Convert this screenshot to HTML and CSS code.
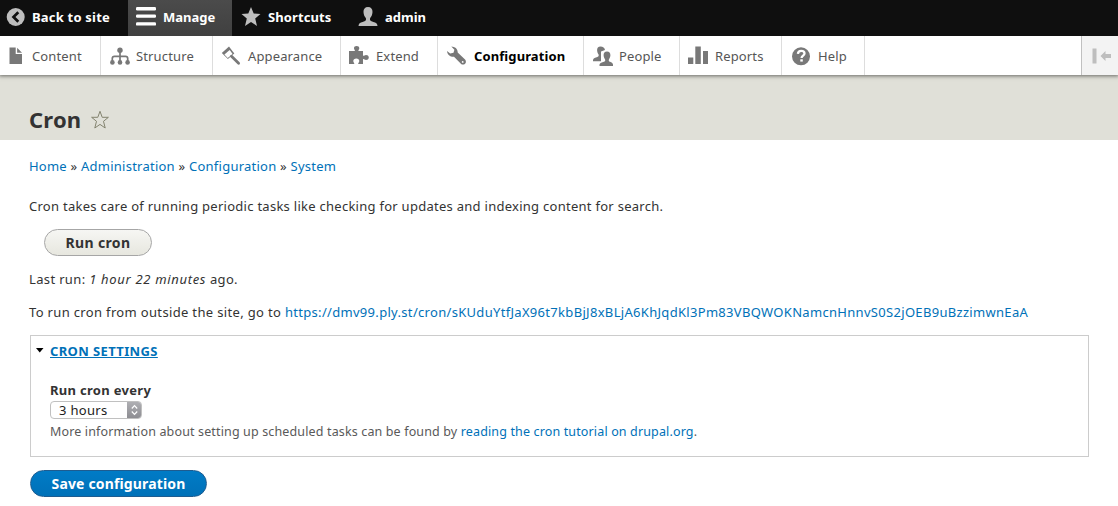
FILE: index.html
```html
<!DOCTYPE html>
<html lang="en">
<head>
<meta charset="utf-8">
<title>Cron</title>
<link rel="stylesheet" href="styles.css">
</head>
<body>
<nav class="bar">
  <a class="bar-item back"><svg class="icon" viewBox="0 0 20 20"><circle cx="9.7" cy="10" r="9" fill="#bebebe"/><path d="M12.3 5.2 7.5 10l4.8 4.8" fill="none" stroke="#0f0f0f" stroke-width="2.7"/></svg><span>Back to site</span></a>
  <a class="bar-item manage"><svg class="icon" viewBox="0 0 20 20" fill="#fff"><rect y="0" width="20" height="3.4" rx="1.2"/><rect y="7.6" width="20" height="3.2" rx="1.2"/><rect y="15.2" width="20" height="3.4" rx="1.2"/></svg><span>Manage</span></a>
  <a class="bar-item shortcuts"><svg class="icon" viewBox="0 0 20 20"><path d="M10 0l2.7 6.6 6.8.4-5.3 4.5 1.8 7.5-6-4-6 4 1.8-7.5L.5 7l6.8-.4z" fill="#bebebe"/></svg><span>Shortcuts</span></a>
  <a class="bar-item admin"><svg class="icon" viewBox="0 0 20 20"><path d="M10 0C7 0 5.300 2 5.500 5c.1 2.500 1 4.600 2.300 6 .5 1.500.2 2.600-1.300 3.300-2.600 1-5 1.400-5.700 3.200L.5 19h19l-.3-1.500c-.7-1.800-3.100-2.200-5.700-3.200-1.500-.7-1.800-1.800-1.300-3.300 1.300-1.400 2.200-3.500 2.300-6C14.700 2 13 0 10 0z" fill="#bebebe"/></svg><span>admin</span></a>
</nav>
<nav class="tray">
  <a class="tab content"><svg class="icon" viewBox="0 0 20 20" fill="#787878"><path d="M1.500 1.500h6.200V8h6.300V18H1.500z"/><path d="M9.100 1.700 14 6.700H9.100z"/></svg><span>Content</span></a>
  <a class="tab structure"><svg class="icon" viewBox="0 0 20 20" fill="#787878"><circle cx="10" cy="4.300" r="2.700"/><path d="M10 5v11M2.300 16v-3.500q0-2.200 2.200-2.200h11q2.200 0 2.200 2.200V16" fill="none" stroke="#787878" stroke-width="1.700"/><circle cx="2.400" cy="16.400" r="2.300"/><circle cx="10" cy="16.400" r="2.300"/><circle cx="17.600" cy="16.400" r="2.300"/></svg><span>Structure</span></a>
  <a class="tab appearance"><svg class="icon" viewBox="0 0 20 20"><path d="M8 .500 13.300 7.400 6.900 13 .800 7z" fill="#787878"/><path d="M8.700 4l2.900 3.900-4.900 4-3.300-3.500z" fill="#fff"/><path d="M10.500 10.200 17.600 17.200" stroke="#787878" stroke-width="2.800" stroke-linecap="round"/></svg><span>Appearance</span></a>
  <a class="tab extend"><svg class="icon" viewBox="0 0 20 20"><path d="M0 5h5.800c.5-.8-.8-1.300-.8-2.700C5 .800 6 0 7.600 0s2.700.800 2.700 2.300c0 1.400-1.300 1.900-.8 2.700H14v4.500c.8.800 1.500-.6 3-.6s2.800.8 2.800 2.500-1.300 2.500-2.800 2.500-2.200-1.400-3-.6V18H9.300c-.6-1 1-1.500 1-3 0-1.600-1.200-2.500-3-2.500s-3 .9-3 2.500c0 1.500 1.400 2 .9 3H0z" fill="#787878"/></svg><span>Extend</span></a>
  <a class="tab configuration"><svg class="icon" viewBox="0 0 20 20"><path d="M4.300.500C8 .600 10.800 2.900 10.700 6.400l7.600 7.300c1.800 2.800-.7 5.900-3.900 4.600L7 10.800C3.500 11.100.3 8.700 0 4.900l3.200 2.500 3.300-.6.900-3z" fill="#787878"/><circle cx="15.700" cy="15.900" r=".9" fill="#fff"/></svg><span>Configuration</span></a>
  <a class="tab people"><svg class="icon" viewBox="0 0 20 20" fill="#787878"><path d="M7.500.500C5.200.500 4 2.100 4.100 4.300c.1 1.900.7 3.200 1.500 4.300.3 1.500-.2 2-1.200 2.500C2.400 11.900.3 12.100 0 13.900v1.400h8V5.500l4-1.500C11.700 1.800 10 .500 7.500.500z"/><path d="M14 5.500c-2.300 0-3.500 1.500-3.400 3.800.1 1.800.7 3 1.500 4.100.4 1.400-.1 1.900-1.200 2.400-1.900.8-4.100 1-4.400 2.700V20H20v-1.500c-.4-1.700-1.300-1.900-3-2.700-1.100-.5-1.500-1-1.100-2.400.8-1.100 1.400-2.300 1.500-4.100.1-2.300-1.100-3.800-3.400-3.800z" stroke="#fff" stroke-width="1.400" paint-order="stroke"/></svg><span>People</span></a>
  <a class="tab reports"><svg class="icon" viewBox="0 0 20 20" fill="#787878"><rect x="0" y="11.500" width="5.300" height="6.500"/><rect x="7.300" y="0.500" width="5.500" height="17.500"/><rect x="15" y="5" width="5" height="13"/></svg><span>Reports</span></a>
  <a class="tab help"><svg class="icon" viewBox="0 0 20 20"><circle cx="9" cy="10.300" r="9" fill="#787878"/><path d="M5.900 7.800c.2-2 1.500-2.900 3.300-2.900 2 0 3.300 1 3.300 2.600 0 2.200-2.900 2.100-2.900 4.600" fill="none" stroke="#fff" stroke-width="2.300"/><rect x="8.300" y="13.300" width="2.500" height="2.300" fill="#fff"/></svg><span>Help</span></a>
  <a class="orientation"><svg class="icon" viewBox="0 0 20 20" fill="#bebebe"><path d="M0.500 2.500h4v15h-4zM8.500 10l5-5v3h5.500v4h-5.500v3z"/></svg></a>
</nav>
<header class="header">
  <h1 class="title">Cron</h1>
  <svg class="icon star" viewBox="0 0 20 20"><path d="M10 1.300l2.200 6h6.200l-4.900 4 1.700 6.700-5.200-3.600L4.800 18l1.700-6.700-4.900-4h6.200z" fill="none" stroke="#83836f" stroke-width="1" stroke-linejoin="round"/></svg>
</header>
<main class="page">
  <p class="line crumbs"><a>Home</a> » <a>Administration</a> » <a>Configuration</a> » <a>System</a></p>
  <p class="line intro">Cron takes care of running periodic tasks like checking for updates and indexing content for search.</p>
  <button class="button run">Run cron</button>
  <p class="line last">Last run: <em>1 hour 22 minutes</em> ago.</p>
  <p class="line outside"><span class="lead">To run cron from outside the site, go to </span><a class="cron-url">https://dmv99.ply.st/cron/sKUduYtfJaX96t7kbBjJ8xBLjA6KhJqdKl3Pm83VBQWOKNamcnHnnvS0S2jOEB9uBzzimwnEaA</a></p>
  <section class="details">
    <div class="summary"><svg class="arrow" viewBox="0 0 8 5"><path d="M0 0h7.500L3.750 4.500z"/></svg><a class="summary-link">CRON SETTINGS</a></div>
    <div class="label">Run cron every</div>
    <div class="select"><span class="value">3 hours</span><span class="stepper"><svg viewBox="0 0 15 18"><path d="M4.800 7.500l2.700-2.800 2.700 2.800M4.800 10.500l2.700 2.800 2.700-2.800" fill="none" stroke="#fff" stroke-width="1.200"/></svg></span></div>
    <p class="description"><span class="more">More information about setting up scheduled tasks can be found by </span><a class="tutorial">reading the cron tutorial on drupal.org</a>.</p>
  </section>
  <button class="button primary">Save configuration</button>
</main>
</body>
</html>
```
FILE: styles.css
```css
* { box-sizing: border-box; }
body {
  margin: 0;
  height: 506px;
  overflow: hidden;
  background: #fff;
  color: #333;
  font: 13px/20px "Noto Sans", "Open Sans", sans-serif;
}
p, h1 { margin: 0; }
a { color: #0071b8; white-space: nowrap; }
.icon { width: 20px; height: 20px; flex: none; }

.bar {
  position: relative;
  z-index: 1;
  display: flex;
  height: 36px;
  background: #0f0f0f;
}
.bar-item {
  display: flex;
  align-items: center;
  gap: 7px;
  padding-bottom: 2px;
  color: #fff;
  font-weight: 700;
}
.back { width: 128px; padding-left: 6px; gap: 6px; letter-spacing: .2px; }
.manage {
  width: 104px;
  padding-left: 8px;
  background: linear-gradient(#4b4b4b, #404040);
}
.shortcuts { width: 117px; padding-left: 9px; letter-spacing: .1px; }
.admin { padding-left: 9px; }

.tray {
  position: relative;
  display: flex;
  height: 39px;
  background: #fff;
  box-shadow: 0 0 4px 1px rgba(0, 0, 0, .55);
}
.tab {
  display: flex;
  align-items: center;
  border-right: 1px solid #ddd;
  color: #565656;
  letter-spacing: .14px;
}
.content { width: 101px; padding-left: 8px; gap: 4px; }
.structure { width: 112px; padding-left: 9px; gap: 6px; }
.appearance { width: 128px; padding-left: 8px; gap: 7px; }
.extend { width: 97px; padding-left: 8px; gap: 7px; }
.configuration { width: 146px; padding-left: 9px; gap: 7px; color: #000; font-weight: 700; letter-spacing: .1px; }
.people { width: 96px; padding-left: 9px; gap: 6px; }
.reports { width: 102px; padding-left: 8px; gap: 7px; }
.help { width: 83px; padding-left: 10px; gap: 6px; }
.orientation {
  display: flex;
  align-items: center;
  width: 37px;
  margin-left: auto;
  padding-left: 10px;
  border-left: 1px solid #c0c0c0;
  background: #f3f3f3;
}

.header {
  display: flex;
  align-items: flex-start;
  gap: 9px;
  height: 65px;
  padding: 30px 0 0 29px;
  background: #e0e0d8;
}
.title { font-size: 22px; line-height: 28px; font-weight: 700; letter-spacing: .2px; }
.star { margin-top: 5px; }

.page { display: flex; flex-direction: column; align-items: flex-start; padding: 16px 28px 0 30px; }
.line { margin-left: -1px; white-space: nowrap; }
.crumbs { letter-spacing: .24px; }
.page .intro { margin-top: 20px; letter-spacing: .27px; }
.button {
  height: 27px;
  padding: 0;
  border: 1px solid #a6a6a6;
  border-radius: 14px;
  background: linear-gradient(#f6f6f3, #e7e7df);
  color: #333;
  font: 700 14px/24px "Noto Sans", "Open Sans", sans-serif;
  white-space: nowrap;
}
.run { width: 108px; margin: 13px 0 0 14px; letter-spacing: .35px; }
.last { margin-top: 13px; letter-spacing: .35px; }
.last em { letter-spacing: .68px; }
.outside { margin-top: 13px; }
.lead { letter-spacing: .34px; }
.cron-url { letter-spacing: .31px; }
.details {
  width: 1059px;
  height: 122px;
  margin-top: 13px;
  padding: 5px 0 0 5px;
  border: 1px solid #ccc;
}
.summary { display: flex; align-items: center; gap: 6px; font-weight: 700; }
.arrow { width: 8px; height: 5px; margin-bottom: 1px; }
.summary-link { text-decoration: underline; letter-spacing: .37px; }
.label { margin: 19px 0 0 14px; font-weight: 700; letter-spacing: .3px; }
.select {
  display: flex;
  width: 92px;
  height: 18px;
  margin: 1px 0 0 14px;
  border: 1px solid #c0c0c0;
  border-radius: 4px;
  overflow: hidden;
}
.value { flex: 1; padding-left: 8px; line-height: 16px; color: #222; letter-spacing: .3px; }
.stepper { width: 15px; margin: -1px; background: linear-gradient(#b1b1b5, #8b8b90); }
.stepper svg { display: block; width: 15px; height: 18px; }
.description {
  margin: 3px 0 0 14px;
  font-size: 12.5px;
  color: #595959;
  letter-spacing: .14px;
  white-space: nowrap;
}
.primary {
  width: 177px;
  margin-top: 13px;
  border-color: #1e5c90;
  background: linear-gradient(#007bc6, #0071b8);
  color: #fff;
  letter-spacing: .15px;
}
```
